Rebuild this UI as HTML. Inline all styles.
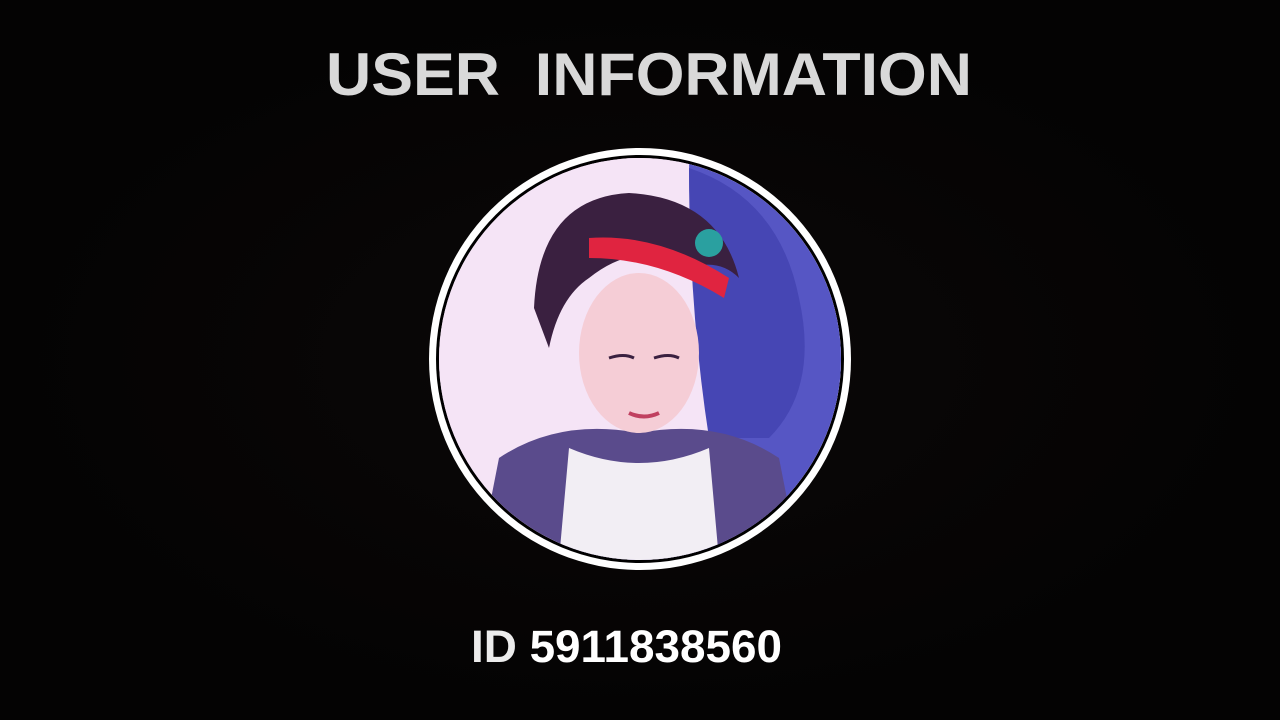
<!DOCTYPE html>
<html><head><meta charset="utf-8"><style>
html,body{margin:0;padding:0;width:1280px;height:720px;overflow:hidden;background:#050404;}
.bg{position:absolute;inset:0;background:radial-gradient(ellipse at 50% 50%,#0b0808 0%,#040303 70%);}
.title{position:absolute;left:326px;top:36px;width:646px;height:72px;}
.id{position:absolute;left:471px;top:620px;width:311px;height:50px;}
.ring{position:absolute;left:429px;top:148px;width:422px;height:422px;border-radius:50%;background:#fff;}
.inner{position:absolute;left:7px;top:7px;width:408px;height:408px;border-radius:50%;background:#000;}
.img{position:absolute;left:3px;top:3px;width:402px;height:402px;border-radius:50%;overflow:hidden;background:#f1dcf3;}
</style></head><body>
<div class="bg"></div>
<svg class="title" viewBox="0 0 646 72"><text x="323" y="59" text-anchor="middle" font-family="Liberation Sans, sans-serif" font-weight="bold" font-size="60" fill="#d9d9d9" textLength="646" lengthAdjust="spacingAndGlyphs">USER&#160;&#160;INFORMATION</text></svg>
<div class="ring"><div class="inner"><div class="img">
<svg width="402" height="402" viewBox="0 0 402 402">
<rect width="402" height="402" fill="#f5e4f6"/>
<path d="M250 0 L402 0 L402 402 L260 402 Q300 300 270 250 Q250 120 250 0Z" fill="#5656c4"/>
<path d="M250 10 Q340 40 360 140 Q380 230 330 280 L270 280 Q250 150 250 10Z" fill="#4646b4"/>
<path d="M60 300 Q120 260 200 275 Q280 260 340 300 L360 402 L40 402Z" fill="#5a4b8c"/>
<path d="M130 290 Q200 320 270 290 L280 402 L120 402Z" fill="#f2eef4"/>
<ellipse cx="200" cy="195" rx="60" ry="80" fill="#f5cdd6"/>
<path d="M95 150 Q100 40 190 35 Q280 40 300 120 Q280 100 250 110 Q200 80 150 120 Q120 140 110 190 Z" fill="#3a2040"/>
<path d="M150 80 Q220 75 290 120 L285 140 Q220 100 150 100Z" fill="#e02440"/>
<circle cx="270" cy="85" r="14" fill="#2aa0a0"/>
<path d="M170 200 Q185 195 195 200 M215 200 Q230 195 240 200" stroke="#3a2040" stroke-width="3" fill="none"/>
<path d="M190 255 Q205 262 220 255" stroke="#c04060" stroke-width="4" fill="none"/>
</svg>
</div></div></div>
<svg class="id" viewBox="0 0 311 50"><text x="0" y="42" font-family="Liberation Sans, sans-serif" font-weight="bold" font-size="45" fill="#fff" textLength="311" lengthAdjust="spacingAndGlyphs"><tspan fill="#ececec">ID</tspan> 5911838560</text></svg>
</body></html>
